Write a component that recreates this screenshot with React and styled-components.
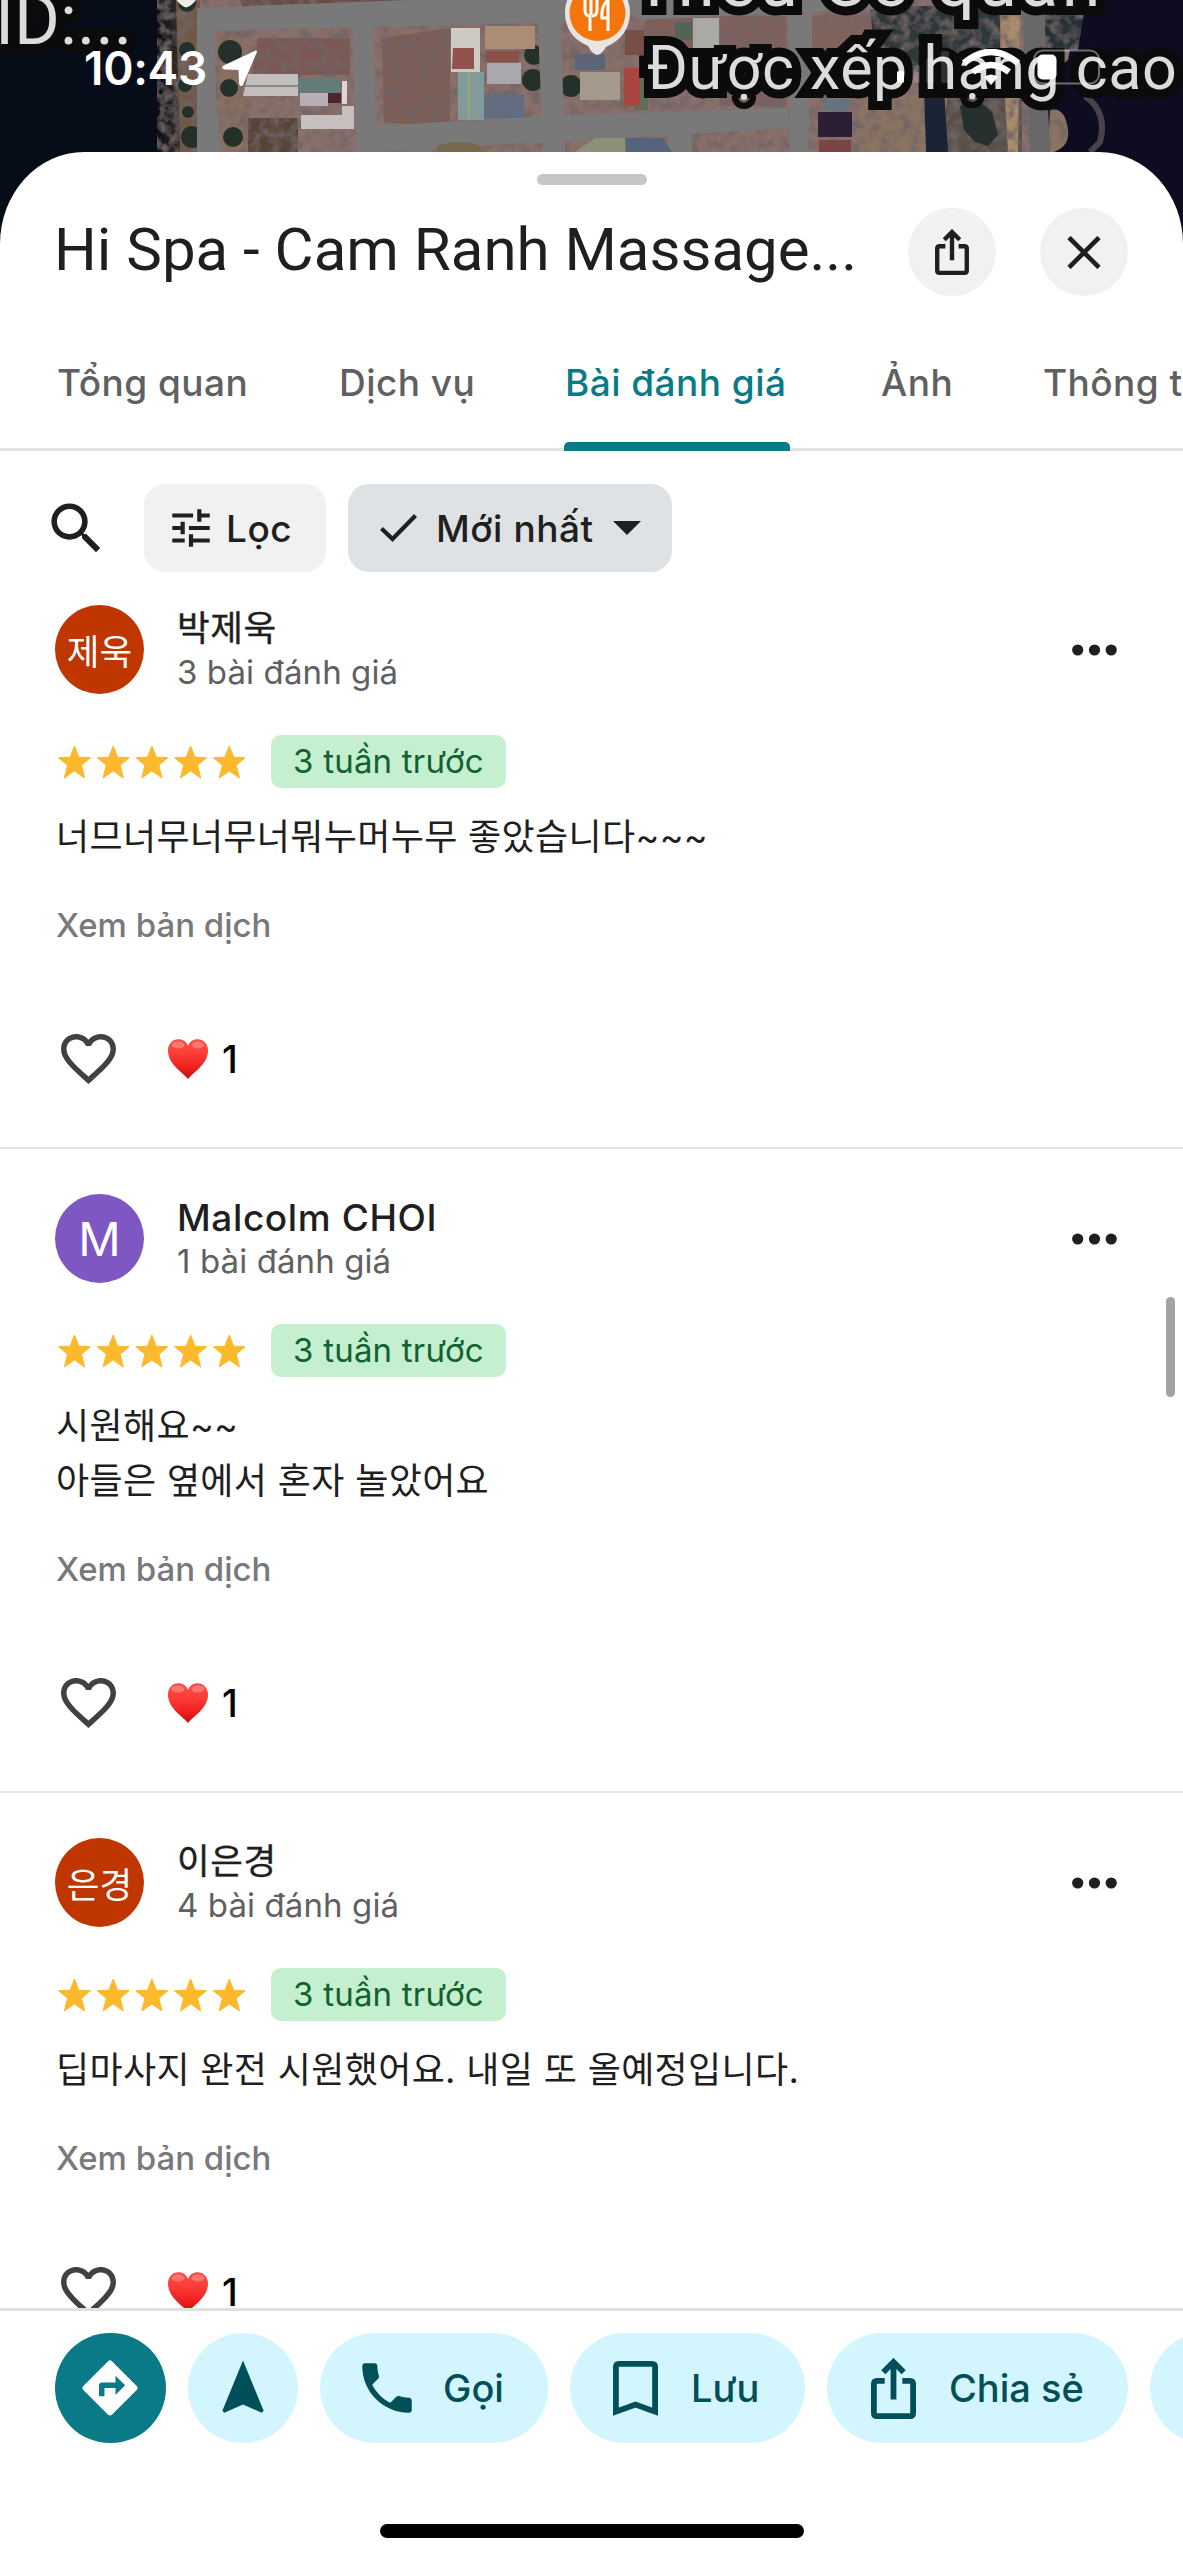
import React from "react";
import styled, { createGlobalStyle } from "styled-components";

const GlobalStyle = createGlobalStyle`
  *, *::before, *::after { box-sizing: border-box; }
  body { margin: 0; background: #fff; }
`;

const sans = `Inter, "Noto Sans CJK KR", "Noto Sans", sans-serif`;

const Screen = styled.div`
  position: relative;
  width: 1183px;
  height: 2560px;
  overflow: hidden;
  display: flex;
  flex-direction: column;
  background: #fff;
  font-family: ${sans};
  color: #1f1f1f;
  svg { display: block; flex: none; }
`;

const MapArea = styled.div`
  position: relative;
  height: 270px;
  margin-bottom: -118px;
  flex: none;
  overflow: hidden;
  background: #060c18;
`;

const MapLabel = styled.div`
  position: absolute;
  left: ${(p) => p.$x}px;
  top: ${(p) => p.$y}px;
  font-family: Roboto, ${sans};
  font-size: ${(p) => p.$size || 61}px;
  font-weight: ${(p) => p.$weight || 400};
  line-height: 72px;
  letter-spacing: ${(p) => p.$ls || 0}px;
  white-space: nowrap;
  color: #dcdcdc;
  -webkit-text-stroke: 18px #0b0b0c;
  paint-order: stroke fill;
  stroke-linejoin: round;
`;

const StatusBar = styled.div`
  position: absolute;
  inset: 0 0 auto 0;
  height: 135px;
  padding: 0 82px 0 84px;
  display: flex;
  align-items: center;
  justify-content: space-between;
  color: #fff;
`;

const Clock = styled.div`
  display: flex;
  align-items: center;
  gap: 15px;
  font-size: 46px;
  font-weight: 600;
  letter-spacing: -0.3px;
  line-height: 56px;
`;

const Sheet = styled.main`
  position: relative;
  flex: 1;
  min-height: 0;
  display: flex;
  flex-direction: column;
  background: #fff;
  border-radius: 84px 84px 0 0 / 92px 92px 0 0;
`;

const Grabber = styled.div`
  width: 110px;
  height: 11px;
  margin: 22px auto 23px;
  border-radius: 6px;
  background: #c6c6c6;
  flex: none;
`;

const TitleRow = styled.header`
  height: 88px;
  flex: none;
  display: flex;
  align-items: center;
  padding: 0 55px 0 54px;
  gap: 44px;
`;

const Title = styled.h1`
  margin: -5px 0 0;
  flex: 1;
  min-width: 0;
  white-space: nowrap;
  font-family: Roboto, ${sans};
  font-size: 60px;
  font-weight: 400;
  line-height: 80px;
  letter-spacing: 0;
`;

const RoundButton = styled.button`
  width: 88px;
  height: 88px;
  flex: none;
  border: 0;
  padding: 0;
  border-radius: 50%;
  display: flex;
  align-items: center;
  justify-content: center;
  background: #f1f1f1;
  color: #1f1f1f;
`;

const Tabs = styled.nav`
  height: 155px;
  flex: none;
  display: flex;
  gap: 90px;
  padding-left: 56px;
  overflow: hidden;
  box-shadow: inset 0 -3px #e2e2e2;
`;

const Tab = styled.div`
  flex: none;
  width: ${(p) => p.$w}px;
  padding: 64px 0 0 1px;
  font-size: 37px;
  font-weight: 500;
  line-height: 45px;
  letter-spacing: 0.45px;
  white-space: nowrap;
  position: relative;
  color: ${(p) => (p.$active ? "#0b7a87" : "#5f6061")};
  &::after {
    content: "";
    display: ${(p) => (p.$active ? "block" : "none")};
    position: absolute;
    inset: auto 0 0 0;
    height: 9px;
    border-radius: 5px 5px 0 0;
    background: #0b7a87;
  }
`;

const Filters = styled.div`
  flex: none;
  display: flex;
  align-items: center;
  padding: 33px 0 0 43px;
`;

const Chip = styled.button`
  height: 88px;
  width: ${(p) => p.$w}px;
  margin-left: ${(p) => p.$ml}px;
  padding: 0 0 0 ${(p) => p.$pl}px;
  border: 0;
  border-radius: 21px;
  display: flex;
  align-items: center;
  gap: ${(p) => p.$gap}px;
  background: ${(p) => (p.$selected ? "#dee2e4" : "#f1f1f1")};
  color: #1f1f1f;
  font: 500 37px/45px ${sans};
  letter-spacing: 0.55px;
  white-space: nowrap;
`;

const ReviewList = styled.section`
  flex: 1;
  min-height: 0;
  overflow: hidden;
`;

const Review = styled.article`
  padding: 45px 0 63px 55px;
  border-bottom: 2px solid #e6e6e6;
  &:first-child { padding-top: 33px; }
`;

const ReviewHead = styled.div`
  height: 89px;
  display: flex;
  align-items: center;
  padding-right: 66px;
`;

const Avatar = styled.div`
  width: 89px;
  height: 89px;
  flex: none;
  border-radius: 50%;
  display: flex;
  align-items: center;
  justify-content: center;
  background: ${(p) => p.$bg};
  color: #fff;
  font-size: ${(p) => (p.$single ? 47 : 35.5)}px;
  font-weight: 400;
`;

const Who = styled.div`
  flex: 1;
  padding: 1px 0 0 33px;
`;

const Name = styled.div`
  font-size: ${(p) => (p.$latin ? 37 : 35.5)}px;
  font-weight: ${(p) => (p.$latin ? 500 : 400)};
  line-height: 45px;
  letter-spacing: 0.6px;
  -webkit-text-stroke: ${(p) => (p.$latin ? 0 : 0.4)}px #1f1f1f;
`;

const Count = styled.div`
  font-size: 33px;
  line-height: 43px;
  letter-spacing: 0.1px;
  color: #5f6061;
`;

const Rating = styled.div`
  height: 53px;
  margin-top: 41px;
  display: flex;
  align-items: center;
`;

const Age = styled.span`
  height: 53px;
  width: 235px;
  margin-left: 26px;
  border-radius: 10px;
  background: #c4f0d0;
  color: #13612f;
  font-size: 33px;
  line-height: 53px;
  letter-spacing: 0.2px;
  text-align: center;
  white-space: nowrap;
`;

const Body = styled.p`
  margin: 22px 0 0 1px;
  font-size: 36px;
  line-height: 55px;
  letter-spacing: 0.35px;
  white-space: pre-line;
`;

const Translate = styled.div`
  margin: 40px 0 0 1px;
  font-size: 33px;
  font-weight: 500;
  line-height: 40px;
  color: #77797c;
`;

const Reactions = styled.div`
  height: 50px;
  margin-top: 89px;
  padding-left: 6px;
  display: flex;
  align-items: center;
`;

const Likes = styled.span`
  margin-left: 52px;
  display: flex;
  align-items: center;
  gap: 14px;
  color: #000;
  font-size: 38px;
  font-weight: 500;
  line-height: 45px;
`;

const ScrollThumb = styled.div`
  position: absolute;
  right: 8px;
  top: 1145px;
  width: 9px;
  height: 100px;
  border-radius: 5px;
  background: #a3a3a3;
`;

const ActionBar = styled.footer`
  height: 252px;
  flex: none;
  border-top: 3px solid #e0e0e0;
  display: flex;
  flex-direction: column;
  justify-content: space-between;
  background: #fff;
`;

const Actions = styled.div`
  display: flex;
  gap: 22px;
  padding: 22px 0 0 55px;
  overflow: hidden;
`;

const Action = styled.button`
  height: 110px;
  width: ${(p) => p.$w || 110.5}px;
  flex: none;
  border: 0;
  border-radius: 55px;
  padding: 0 0 0 ${(p) => p.$pl || 0}px;
  display: flex;
  align-items: center;
  justify-content: ${(p) => (p.$pl ? "flex-start" : "center")};
  gap: ${(p) => p.$gap || 0}px;
  background: ${(p) => (p.$primary ? "#0b7a87" : "#d3f5fe")};
  color: ${(p) => (p.$primary ? "#fff" : "#004f59")};
  font: 500 38px/46px ${sans};
  white-space: nowrap;
`;

const HomeIndicator = styled.div`
  width: 424px;
  height: 14px;
  margin: 0 auto 22px;
  border-radius: 7px;
  background: #000;
`;

const MdIcon = ({ size, d }) => (
  <svg width={size} height={size} viewBox="0 0 24 24" fill="currentColor"><path d={d} /></svg>
);

const ShareIcon = ({ w, h }) => (
  <svg width={w} height={h} viewBox="0 0 45 61" fill="none" stroke="currentColor" strokeWidth="5.8">
    <path d="M13.7 22.8H6Q2.9 22.8 2.9 26V55Q2.9 58.1 6 58.1H39Q42.1 58.1 42.1 55V26Q42.1 22.8 39 22.8H31.3M22.5 41.5V5M12.3 14.2L22.5 4L32.7 14.2" />
  </svg>
);

const starPath = "M16.5 1L20.900 12.200L32.500 12.700L23.500 20.200L26.600 33L16.500 25.900L6.400 33L9.500 20.200L.5 12.700L12.100 12.200Z";
const Stars = () => (
  <svg width="190" height="34" viewBox="-3 0 190 34" fill="#fdb92c" stroke="#fdb92c" strokeWidth="1" strokeLinejoin="round">
    {[0, 1, 2, 3, 4].map((i) => <path key={i} d={starPath} transform={`translate(${i * 38.7} 0)`} />)}
  </svg>
);

const RedHeart = () => (
  <svg width="40" height="40" viewBox="0 0 40 40">
    <defs>
      <linearGradient id="heartRed" x1="0" y1="0" x2="0" y2="1">
        <stop offset="0" stopColor="#fb4f48" />
        <stop offset=".4" stopColor="#fb3a34" />
        <stop offset=".75" stopColor="#ee1d1d" />
        <stop offset="1" stopColor="#b81216" />
      </linearGradient>
    </defs>
    <path d="M20 40C13 32 0 25 0 11.500C0 5 4.500 .3 10.500 .3C15 .3 18.500 3 20 7C21.500 3 25 .3 29.500 .3C35.500 .3 40 5 40 11.500C40 25 27 32 20 40Z" fill="url(#heartRed)" />
    <ellipse cx="10" cy="6" rx="6.500" ry="3.500" fill="#fff" opacity=".25" />
    <ellipse cx="30" cy="6" rx="6.500" ry="3.500" fill="#fff" opacity=".25" />
  </svg>
);

const Dots = () => (
  <svg width="45" height="12" viewBox="0 0 45 12" fill="#1f1f1f">
    <circle cx="5.700" cy="6" r="5.600" /><circle cx="22.500" cy="6" r="5.600" /><circle cx="39.200" cy="6" r="5.600" />
  </svg>
);

const heartPath = "M16.5 3c-1.74 0-3.41.81-4.5 2.09C10.91 3.81 9.24 3 7.5 3 4.42 3 2 5.42 2 8.5c0 3.78 3.4 6.86 8.55 11.54L12 21.35l1.45-1.32C18.6 15.36 22 12.28 22 8.5 22 5.42 19.58 3 16.5 3zm-4.4 15.55l-.1.1-.1-.1C7.14 14.24 4 11.39 4 8.5 4 6.5 5.5 5 7.5 5c1.54 0 3.04.99 3.57 2.36h1.87C13.46 5.99 14.96 5 16.5 5c2 0 3.5 1.5 3.5 3.5 0 2.89-3.14 5.74-7.9 10.05z";
const searchPath = "M15.5 14h-.79l-.28-.27A6.471 6.471 0 0 0 16 9.5 6.5 6.5 0 1 0 9.5 16c1.61 0 3.09-.59 4.23-1.57l.27.28v.79l5 4.99L20.49 19l-4.99-5zm-6 0C7.01 14 5 11.99 5 9.5S7.01 5 9.5 5 14 7.01 14 9.5 11.99 14 9.5 14z";
const tunePath = "M3 17v2h6v-2H3zM3 5v2h10V5H3zm10 16v-2h8v-2h-8v-2h-2v6h2zM7 9v2H3v2h4v2h2V9H7zm14 4v-2H11v2h10zm-6-4h2V7h4V5h-4V3h-2v6z";
const directionsPath = "M21.71 11.29l-9-9a.996.996 0 0 0-1.41 0l-9 9a.996.996 0 0 0 0 1.41l9 9c.39.39 1.02.39 1.41 0l9-9a.996.996 0 0 0 0-1.41zM14 14.5V12h-4v3H8v-4c0-.55.45-1 1-1h5V7.5l3.500 3.500-3.500 3.500z";
const navPath = "M12 2L4.500 20.290l.71.71L12 18l6.790 3 .71-.71z";
const phonePath = "M6.62 10.79c1.44 2.83 3.76 5.14 6.59 6.59l2.2-2.2c.27-.27.67-.36 1.02-.24 1.12.37 2.33.57 3.57.57.55 0 1 .45 1 1V20c0 .55-.45 1-1 1-9.39 0-17-7.61-17-17 0-.55.45-1 1-1h3.5c.55 0 1 .45 1 1 0 1.25.2 2.45.57 3.57.11.35.03.74-.25 1.02l-2.2 2.2z";

const Satellite = () => (
  <svg width="1183" height="270" viewBox="0 0 1183 270">
    <defs>
      <filter id="ground" x="0" y="0" width="100%" height="100%">
        <feTurbulence type="fractalNoise" baseFrequency="0.1" numOctaves="4" seed="4" />
        <feColorMatrix values="0 0 0 0 .16  0 0 0 0 .13  0 0 0 0 .13  0 2.400 0 0 -0.95" />
        <feComposite in2="SourceGraphic" operator="in" result="n" />
        <feMerge><feMergeNode in="SourceGraphic" /><feMergeNode in="n" /></feMerge>
      </filter>
      <linearGradient id="shore" x1="0" x2="1">
        <stop offset="0" stopColor="#060c18" /><stop offset="1" stopColor="#3a332f" />
      </linearGradient>
    </defs>
    <rect width="1183" height="270" fill="#060c18" />
    <rect x="1040" width="143" height="270" fill="#0d0c20" />
    <g filter="url(#ground)">
      <path d="M165 0H1080L1068 60L1040 80V270H165Z" fill="#8a706b" />
      <path d="M157 0H182V270H157Z" fill="url(#shore)" />
      <path d="M176 0H200V152H180Z" fill="#705849" />
      <path d="M216 30H245V152H222Z" fill="#8b7060" />
      <path d="M258 38H350V75H300V84H250Z" fill="#7c5855" />
      <path d="M382 38L450 28V128L384 122Z" fill="#7d5d57" />
      <rect x="248" y="118" width="50" height="34" fill="#594539" />
      <path d="M240 0H560L535 4L245 12Z" fill="#6c4842" />
      <rect x="645" y="16" width="60" height="40" fill="#815f58" />
      <rect x="720" y="16" width="66" height="90" fill="#80605b" />
      <rect x="812" y="15" width="60" height="55" fill="#84635b" />
      <path d="M870 6H1000V72L940 78L875 60Z" fill="#2e373b" />
      <path d="M1045 6H1085L1078 50H1045Z" fill="#283238" />
      <path d="M950 80H1022V152H940Z" fill="#58504a" />
      <path d="M1000 10L1020 12L1018 152L1008 152Z" fill="#a98c6c" />
      <path d="M860 95H925V152H860Z" fill="#8b7362" />
      <path d="M1050 110Q1065 106 1068 130Q1070 146 1054 152H1048Z" fill="#8a7362" />
    </g>
    <path d="M1085 96Q1108 112 1100 142L1090 152" stroke="#4a4248" strokeWidth="6" fill="none" />
    <path d="M960 106Q975 95 992 112L998 135L988 146L975 142L964 130Z" fill="#26302f" />
    <path d="M924 88H944L948 152H926Z" fill="#1b2434" />
    <g fill="#26302a">
      <circle cx="230" cy="52" r="12" /><circle cx="229" cy="88" r="9" /><circle cx="233" cy="137" r="10" />
      <circle cx="187" cy="50" r="8" /><circle cx="185" cy="85" r="7" /><circle cx="188" cy="112" r="6" /><circle cx="192" cy="137" r="11" />
      <circle cx="534" cy="55" r="10" /><circle cx="533" cy="80" r="11" /><circle cx="571" cy="86" r="11" /><circle cx="187" cy="3" r="9" />
    </g>
    <g fill="#7a7979">
      <path d="M197 8H217Q212 90 222 152H197Z" />
      <path d="M197 8L620 -8V21L205 31Z" />
      <path d="M352 14H372L378 152H356Z" />
      <path d="M537 0H560L565 152H543Z" />
      <path d="M356 127L565 115L788 108V128L565 141L360 152Z" />
      <path d="M788 14H812L808 152H790Z" />
      <path d="M408 126H430V152H408Z" /><path d="M668 125H692V152H668Z" />
      <path d="M620 0H900V8L640 20Z" />
    </g>
    <path d="M1022 8H1044L1050 152H1030Z" fill="#686869" />
    <path d="M248 74H298V96H243Z" fill="#c3bebc" /><path d="M244 86H298" stroke="#8d8788" strokeWidth="2" />
    <path d="M298 78H340V94H298Z" fill="#647c78" /><path d="M342 81H347V104H342Z" fill="#ddd7d3" />
    <path d="M300 93H328V106H300Z" fill="#b9aeb5" /><path d="M328 93H341V103H328Z" fill="#4c262b" />
    <path d="M301 115H342V106H354V129H301Z" fill="#c7c0be" />
    <path d="M451 28H480V72H451Z" fill="#cfc9c4" /><path d="M453 48H474V69H452Z" fill="#91534b" />
    <path d="M458 72H484V120H458Z" fill="#819b9b" /><path d="M469 72V118" stroke="#9fa671" strokeWidth="2" />
    <path d="M486 51H519V62H486Z" fill="#8b5049" /><path d="M487 63H521V84H487Z" fill="#a9a9ad" />
    <path d="M485 94H524V118H484Z" fill="#626d82" /><path d="M485 26H535V49H485Z" fill="#ab8d76" />
    <path d="M580 72H620V100H580Z" fill="#a5998c" /><path d="M575 54H605V70H575Z" fill="#5c6478" />
    <path d="M693 18H719V50H693Z" fill="#a9a9a6" /><path d="M675 22H692V40H675Z" fill="#526455" />
    <path d="M625 30H644V55H625Z" fill="#784e49" /><path d="M624 68H640V106H624Z" fill="#a94640" /><path d="M640 68H648V110H634V106H640Z" fill="#606e57" />
    <path d="M818 112H852V137H818Z" fill="#2c1e35" /><path d="M824 99H850V111H824Z" fill="#66737f" /><path d="M819 140H851V152H819Z" fill="#7a4543" />
    <path d="M437 146Q460 138 480 146L487 152H437Z" fill="#756a4d" /><path d="M575 152L595 138H625V152Z" fill="#8d9078" /><path d="M625 138H663L672 152H627Z" fill="#54647c" />
    <path d="M172 -8Q178 5 186 7.500Q195 5 200 -8Z" fill="#eeeceb" />
    <path d="M597 55Q592 54 588 46Q565 36 565 12A32.500 32.500 0 0 1 630 12Q630 36 606 47Q602 54 597 55Z" fill="#e7e4e2" />
    <circle cx="597.500" cy="13" r="28" fill="#f4750c" />
    <path d="M585 -4V10Q585 16 590 16V31M597 -4V10Q597 16 592 16M591 -4V15M608 31V0Q601 6 602 18H608" stroke="#fff" strokeWidth="3" fill="none" />
  </svg>
);

const StatusIcons = () => (
  <svg width="210" height="37" viewBox="891 49 210 37">
    <rect x="897" y="71" width="7" height="12" rx="2" fill="#fff" />
    <g fill="#fff" opacity=".15"><rect x="912" y="65" width="8" height="18" rx="2" /><rect x="926" y="58" width="8" height="25" rx="2" /><rect x="941" y="51" width="8" height="32" rx="2" /></g>
    <g fill="none" stroke="#fff" strokeWidth="6.500"><path d="M964 63Q991 41 1018 63" /><path d="M973 72Q991 58 1009 72" /></g>
    <path d="M984 77Q991 72 998 77L991 85Z" fill="#fff" />
    <rect x="1034" y="50.500" width="65" height="33" rx="9" fill="none" stroke="#fff" strokeWidth="2" opacity=".4" />
    <rect x="1037.500" y="54.500" width="19" height="25" rx="5" fill="#fff" />
  </svg>
);

const reviews = [
  { initials: "제욱", bg: "#bf3600", name: "박제욱", count: "3 bài đánh giá", text: "너므너무너무너뭐누머누무 좋았습니다~~~" },
  { initials: "M", bg: "#7e57c2", name: "Malcolm CHOI", latin: true, count: "1 bài đánh giá", text: "시원해요~~\n아들은 옆에서 혼자 놀았어요" },
  { initials: "은경", bg: "#bf3600", name: "이은경", count: "4 bài đánh giá", text: "딥마사지 완전 시원했어요. 내일 또 올예정입니다." },
];

export default function App() {
  return (
    <Screen>
      <GlobalStyle />
      <MapArea>
        <Satellite />
        <MapLabel $x={-5} $y={-16} $size={70}>ID:...</MapLabel>
        <MapLabel $x={645} $y={-54} $size={70} $ls={3.4}>Hiếu Có quán</MapLabel>
        <MapLabel $x={647} $y={32} $ls={0.5}>Được xếp hạng cao</MapLabel>
        <StatusBar>
          <Clock>
            10:43
            <svg width="36" height="36" viewBox="0 0 36 36" fill="#fff" stroke="#fff" strokeWidth="2" strokeLinejoin="round"><path d="M34 1.500L20 34.500Q18.500 36 18 33L17.500 19L3 18.500Q0 18 2 16.500Z" /></svg>
          </Clock>
          <StatusIcons />
        </StatusBar>
      </MapArea>
      <Sheet>
        <Grabber />
        <TitleRow>
          <Title>Hi Spa - Cam Ranh Massage...</Title>
          <RoundButton><ShareIcon w={34} h={46} /></RoundButton>
          <RoundButton>
            <svg width="34" height="33" viewBox="0 0 34 33" stroke="#1f1f1f" strokeWidth="4.600"><path d="M2 1.500L32 31.500M32 1.500L2 31.500" /></svg>
          </RoundButton>
        </TitleRow>
        <Tabs>
          <Tab $w={192}>Tổng quan</Tab>
          <Tab $w={136}>Dịch vụ</Tab>
          <Tab $w={226} $active>Bài đánh giá</Tab>
          <Tab $w={72}>Ảnh</Tab>
          <Tab $w={200}>Thông tin</Tab>
        </Tabs>
        <Filters>
          <MdIcon size={67} d={searchPath} />
          <Chip $w={182} $ml={34} $pl={22} $gap={10}><MdIcon size={50} d={tunePath} />Lọc</Chip>
          <Chip $selected $w={324} $ml={22} $pl={32} $gap={19}>
            <svg width="37" height="28" viewBox="0 0 37 28" fill="none" stroke="#1f1f1f" strokeWidth="4.200"><path d="M1.500 14.500L12.500 25L35.500 1.500" /></svg>
            Mới nhất
            <svg width="28" height="14" viewBox="0 0 28 14" fill="#1f1f1f"><path d="M0 0H28L14 14Z" /></svg>
          </Chip>
        </Filters>
        <ReviewList>
          {reviews.map((r) => (
            <Review key={r.name}>
              <ReviewHead>
                <Avatar $bg={r.bg} $single={r.latin}>{r.initials}</Avatar>
                <Who>
                  <Name $latin={r.latin}>{r.name}</Name>
                  <Count>{r.count}</Count>
                </Who>
                <Dots />
              </ReviewHead>
              <Rating><Stars /><Age>3 tuần trước</Age></Rating>
              <Body>{r.text}</Body>
              <Translate>Xem bản dịch</Translate>
              <Reactions>
                <svg width="55" height="50" viewBox="2 3 20 18.350" preserveAspectRatio="none" fill="#3f4143"><path d={heartPath} /></svg>
                <Likes><RedHeart />1</Likes>
              </Reactions>
            </Review>
          ))}
        </ReviewList>
        <ActionBar>
          <Actions>
            <Action $primary><MdIcon size={66} d={directionsPath} /></Action>
            <Action><MdIcon size={66} d={navPath} /></Action>
            <Action $w={228} $pl={34} $gap={23}><MdIcon size={66} d={phonePath} />Gọi</Action>
            <Action $w={235} $pl={43} $gap={33}>
              <svg width="45" height="55" viewBox="0 0 45 55" fill="none" stroke="currentColor" strokeWidth="5.800"><path d="M2.900 50.700V6Q2.900 2.900 6 2.900H39Q42.100 2.900 42.100 6V50.700L22.500 43.500Z" /></svg>
              Lưu
            </Action>
            <Action $w={301} $pl={44} $gap={33}><ShareIcon w={45} h={61} />Chia sẻ</Action>
            <Action $w={200} />
          </Actions>
          <HomeIndicator />
        </ActionBar>
        <ScrollThumb />
      </Sheet>
    </Screen>
  );
}
